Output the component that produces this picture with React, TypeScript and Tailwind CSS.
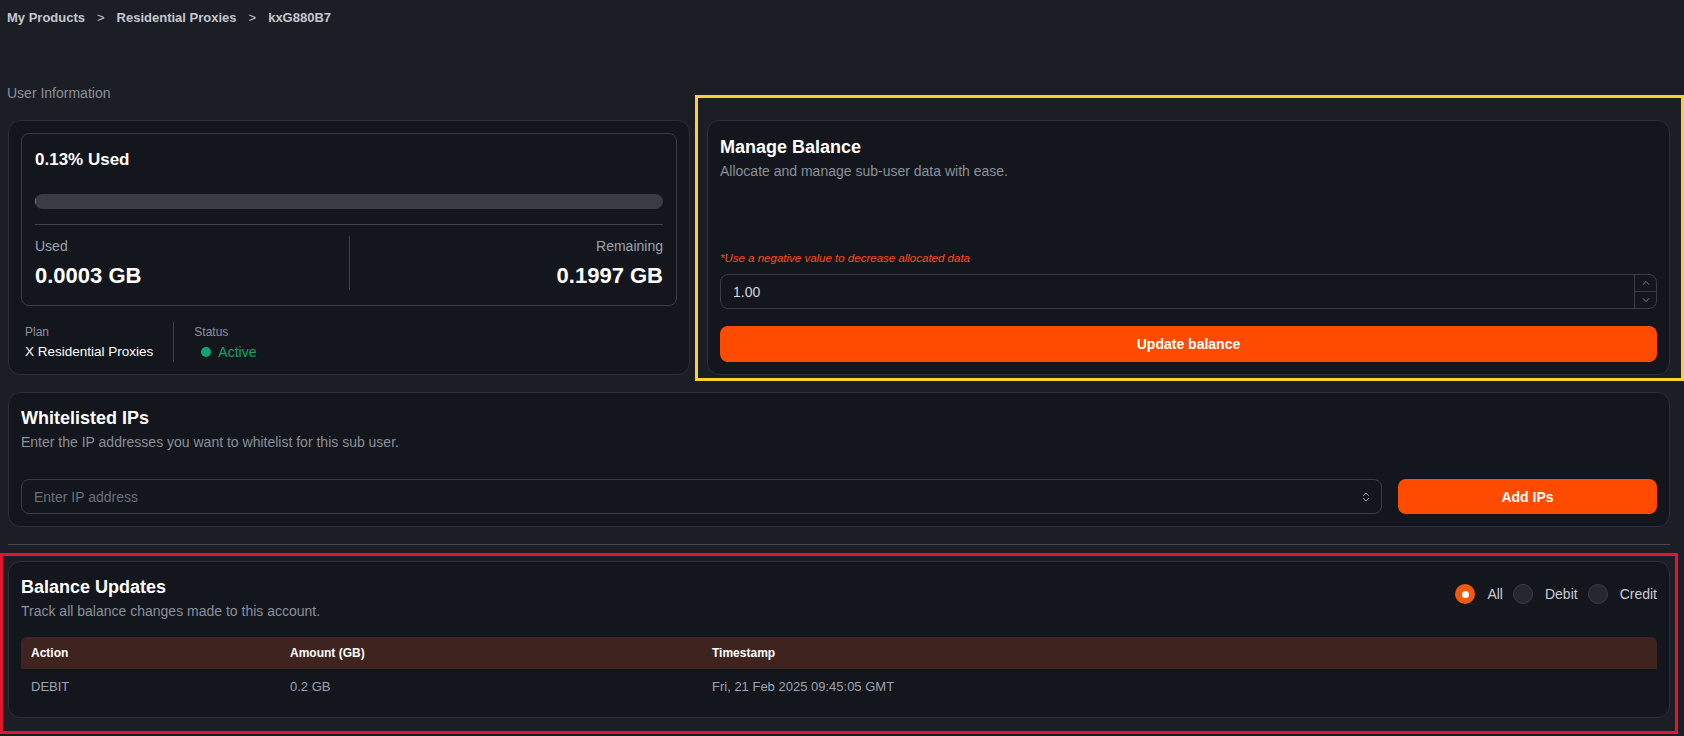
import { ChevronUp, ChevronDown, ChevronsUpDown } from 'lucide-react';

function Radio({ label, checked }: { label: string; checked?: boolean }) {
  return (
    <label className="flex items-center gap-3 text-sm text-[#c9cdd4]">
      {checked ? (
        <span className="flex h-5 w-5 items-center justify-center rounded-full bg-[#f05a0c]">
          <span className="h-[7px] w-[7px] rounded-full bg-white" />
        </span>
      ) : (
        <span className="h-5 w-5 rounded-full border border-[#3a3d44] bg-[#25282e]" />
      )}
      {label}
    </label>
  );
}

export default function App() {
  return (
    <div className="min-h-screen bg-[#1b1e25] pl-2 pr-[14px] pt-2 font-['Liberation_Sans',Arial,sans-serif]">
      {/* breadcrumb */}
      <div className="-ml-px flex h-5 items-center gap-3 text-[13px] font-bold text-[#c3c7cf]">
        <span>My Products</span>
        <span className="font-normal">&gt;</span>
        <span>Residential Proxies</span>
        <span className="font-normal">&gt;</span>
        <span>kxG880B7</span>
      </div>

      <p className="-ml-px mt-[57px] text-sm leading-4 text-[#8b909a]">User Information</p>

      <div className="mt-[19px] flex gap-[17px]">
        {/* usage card */}
        <div className="w-[682px] rounded-xl border border-[#2c2f37] bg-[#13161d] p-3">
          <div className="rounded-lg border border-[#3b3e46] px-[13px] pt-3 pb-[15px]">
            <h2 className="text-[17px] font-semibold leading-7 text-white">0.13% Used</h2>
            <div className="mt-5 h-[15px] overflow-hidden rounded-full bg-[#393c44]">
              <div className="h-full w-[0.13%] bg-[#ff4d00]" />
            </div>
            <div className="mt-[15px] border-t border-[#3f424a]" />
            <div className="grid grid-cols-2 pt-[11px]">
              <div>
                <p className="text-sm leading-5 text-[#9ca3af]">Used</p>
                <p className="mt-[6px] text-[22px] font-bold leading-7 text-white">0.0003 GB</p>
              </div>
              <div className="border-l border-[#3f424a] text-right">
                <p className="text-sm leading-5 text-[#9ca3af]">Remaining</p>
                <p className="mt-[6px] text-[22px] font-bold leading-7 text-white">0.1997 GB</p>
              </div>
            </div>
          </div>
          <div className="mt-4 flex pl-1">
            <div className="border-r border-[#3f424a] pr-5">
              <p className="text-xs leading-5 text-[#8b909a]">Plan</p>
              <p className="text-[13.5px] leading-5 text-white">X Residential Proxies</p>
            </div>
            <div className="pl-5">
              <p className="text-xs leading-5 text-[#8b909a]">Status</p>
              <p className="ml-[7px] flex items-center gap-[7px] text-sm leading-5 text-[#12a36b]">
                <span className="h-[10px] w-[10px] rounded-full bg-[#10a36a]" />
                Active
              </p>
            </div>
          </div>
        </div>

        {/* manage balance */}
        <div className="relative flex-1">
          <div className="flex h-full flex-col rounded-xl border border-[#2c2f37] bg-[#13161d] p-3">
            <h2 className="text-lg font-bold leading-7 text-white">Manage Balance</h2>
            <p className="text-sm leading-5 text-[#8b909a]">Allocate and manage sub-user data with ease.</p>
            <div className="mt-auto">
              <p className="text-[11.5px] italic leading-4 text-[#ff4a1a]">*Use a negative value to decrease allocated data</p>
              <div className="mt-2 flex h-[35px] items-center overflow-hidden rounded-lg border border-[#3b3e46]">
                <span className="flex-1 pl-3 text-sm text-[#d4d7dd]">1.00</span>
                <div className="flex h-full w-[22px] flex-col border-l border-[#3b3e46] text-[#a0a5ae]">
                  <span className="flex flex-1 items-center justify-center border-b border-[#3b3e46]">
                    <ChevronUp size={12} strokeWidth={1.5} />
                  </span>
                  <span className="flex flex-1 items-center justify-center">
                    <ChevronDown size={12} strokeWidth={1.5} />
                  </span>
                </div>
              </div>
              <button className="mt-[17px] h-9 w-full rounded-lg bg-[#ff4b00] text-sm font-bold text-white">
                Update balance
              </button>
            </div>
          </div>
          <div className="pointer-events-none absolute -left-3 -right-[14px] -top-[25px] -bottom-[6px] border-[3px] border-[#fcd12a]" />
        </div>
      </div>

      {/* whitelisted IPs */}
      <div className="mt-[17px] rounded-xl border border-[#2c2f37] bg-[#13161d] px-3 pt-[11px] pb-3">
        <h2 className="text-lg font-bold leading-7 text-white">Whitelisted IPs</h2>
        <p className="text-sm leading-5 text-[#8b909a]">Enter the IP addresses you want to whitelist for this sub user.</p>
        <div className="mt-[27px] flex gap-4">
          <div className="flex h-[35px] flex-1 items-center rounded-lg border border-[#3b3e46] pl-3 pr-[9px]">
            <span className="flex-1 text-sm text-[#6b7079]">Enter IP address</span>
            <ChevronsUpDown size={12} className="text-[#9ca3af]" />
          </div>
          <button className="h-[35px] w-[259px] rounded-lg bg-[#ff4b00] text-sm font-bold text-white">Add IPs</button>
        </div>
      </div>

      <div className="mt-[17px] border-t border-[#45484f]" />

      {/* balance updates */}
      <div className="relative mt-4">
        <div className="rounded-xl border border-[#2c2f37] bg-[#13161d] px-3 pt-[11px] pb-3">
          <div className="flex items-start justify-between">
            <div>
              <h2 className="text-lg font-bold leading-7 text-white">Balance Updates</h2>
              <p className="text-sm leading-5 text-[#8b909a]">Track all balance changes made to this account.</p>
            </div>
            <div className="mt-[11px] flex items-center gap-[10px]">
              <Radio label="All" checked />
              <Radio label="Debit" />
              <Radio label="Credit" />
            </div>
          </div>
          <div className="mt-4">
            <div className="grid h-8 grid-cols-[259px_422px_1fr] items-center rounded-t-md bg-[#3e231f] px-[10px] text-xs font-bold text-white">
              <span>Action</span>
              <span>Amount (GB)</span>
              <span>Timestamp</span>
            </div>
            <div className="grid h-9 grid-cols-[259px_422px_1fr] items-center px-[10px] text-[13px] text-[#9ca3af]">
              <span>DEBIT</span>
              <span>0.2 GB</span>
              <span>Fri, 21 Feb 2025 09:45:05 GMT</span>
            </div>
          </div>
        </div>
        <div className="pointer-events-none absolute -left-2 -right-2 -top-2 -bottom-4 border-[3px] border-[#e0182d]" />
      </div>
    </div>
  );
}
